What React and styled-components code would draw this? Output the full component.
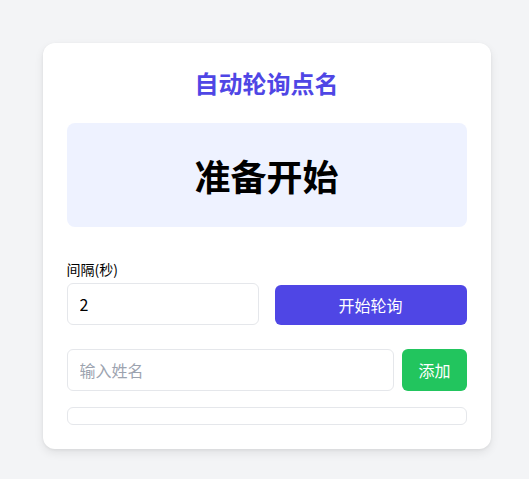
import React, {useState} from 'react';
import styled, {createGlobalStyle} from "styled-components";

const GlobalStyle = createGlobalStyle`
  html, body {
    margin: 0;
    padding: 0;
    background: #f3f4f6;
    font-family: 'Noto Sans CJK SC', 'Noto Sans', sans-serif;
  }
`;

const Page = styled.div`
  padding: 42.5px 38px 30px 42.5px;
`;

const Card = styled.div`
  width: 448px;
  box-sizing: border-box;
  padding: 24px;
  background: #fff;
  border-radius: 12px;
  box-shadow: 0 4px 10px rgba(0, 0, 0, 0.08), 0 1px 3px rgba(0, 0, 0, 0.06);
`;

const Title = styled.h1`
  margin: 0;
  text-align: center;
  color: #4f46e5;
  font-size: 24px;
  line-height: 32px;
  font-weight: 700;
`;

const Display = styled.div`
  margin-top: 24px;
  height: 104px;
  display: flex;
  align-items: center;
  justify-content: center;
  background: #eef2ff;
  border-radius: 8px;
  font-size: 36px;
  font-weight: 700;
  color: #000;
`;

const ControlRow = styled.div`
  margin-top: 32px;
  display: grid;
  grid-template-columns: 1fr 1fr;
  gap: 16px;
  align-items: end;
`;

const Field = styled.div`
  display: flex;
  flex-direction: column;
`;

const Label = styled.label`
  font-size: 14px;
  line-height: 20px;
  margin-bottom: 4px;
  color: #000;
`;

const Input = styled.input`
  box-sizing: border-box;
  height: 42px;
  width: 100%;
  padding: 0 12px;
  border: 1px solid #e5e7eb;
  border-radius: 6px;
  font-family: inherit;
  font-size: 16px;
  color: #000;
  outline: none;

  &::placeholder {
    color: #9ca3af;
  }
`;

const Button = styled.button`
  box-sizing: border-box;
  height: ${({tall}) => tall ? '42px' : '40px'};
  padding: 0 16px;
  border: none;
  border-radius: 6px;
  background: ${({color}) => color};
  color: #fff;
  font-family: inherit;
  font-size: 16px;
  cursor: pointer;
  white-space: nowrap;
`;

const AddRow = styled.div`
  margin-top: 24px;
  display: flex;
  gap: 8px;
`;

const NameList = styled.ul`
  margin: 16px 0 0;
  padding: 8px;
  list-style: none;
  border: 1px solid #e5e7eb;
  border-radius: 6px;
`;

export default function App() {
    const [interval, setIntervalValue] = useState('2');
    const [name, setName] = useState('');
    const [names, setNames] = useState([]);

    return (
        <Page>
            <GlobalStyle/>
            <Card>
                <Title>自动轮询点名</Title>
                <Display>准备开始</Display>
                <ControlRow>
                    <Field>
                        <Label>间隔(秒)</Label>
                        <Input value={interval} onChange={e => setIntervalValue(e.target.value)}/>
                    </Field>
                    <Button color="#4f46e5">开始轮询</Button>
                </ControlRow>
                <AddRow>
                    <Input placeholder="输入姓名" value={name} onChange={e => setName(e.target.value)}/>
                    <Button tall color="#22c55e" onClick={() => {
                        if (name.trim()) {
                            setNames([...names, name.trim()]);
                            setName('');
                        }
                    }}>添加</Button>
                </AddRow>
                <NameList>
                    {names.map((n, i) => <li key={i}>{n}</li>)}
                </NameList>
            </Card>
        </Page>
    );
}
